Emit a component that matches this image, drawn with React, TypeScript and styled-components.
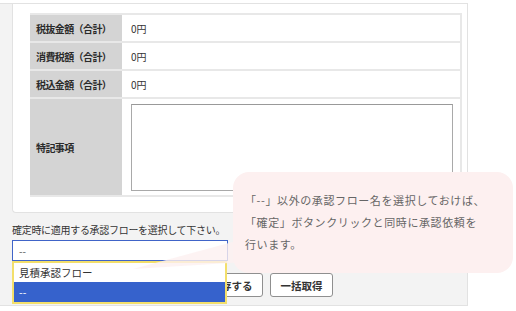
import React from "react";
import styled, { createGlobalStyle } from "styled-components";

const GlobalStyle = createGlobalStyle`
  html, body {
    margin: 0;
    padding: 0;
    background: #ffffff;
  }
  body {
    font-family: "Noto Sans CJK JP", "Noto Sans", sans-serif;
    color: #333333;
  }
`;

const Page = styled.div`
  position: relative;
  width: 516px;
  height: 311px;
  overflow: hidden;
`;

const Frame = styled.div`
  margin-top: 3px;
  width: 468px;
  height: 303px;
  box-sizing: border-box;
  background: #f3f3f3;
  border-top: 1px solid #e2e2e2;
  border-right: 1px solid #e2e2e2;
  border-bottom: 1px solid #e2e2e2;
  padding-left: 12px;
`;

const Panel = styled.div`
  background: #ffffff;
  border-left: 1px solid #e2e2e2;
  border-bottom: 1px solid #e2e2e2;
  border-bottom-left-radius: 4px;
  padding: 9px 5px 15px 17px;
`;

const Table = styled.table`
  width: 100%;
  border-collapse: separate;
  border-spacing: 0;
  border-top: 2px solid #e8e8e8;
`;

const Row = styled.tr<{ $tall?: boolean }>`
  height: ${(p) => (p.$tall ? "98px" : "28px")};
`;

const HeadCell = styled.th`
  width: 92px;
  box-sizing: border-box;
  background: #d4d4d4;
  border-bottom: 2px solid #e8e8e8;
  padding: 0 0 0 6px;
  text-align: left;
  vertical-align: middle;
  font-size: 10px;
  font-weight: 700;
  letter-spacing: -0.6px;
  color: #2a2a2a;
  white-space: nowrap;
`;

const ValueCell = styled.td`
  border-bottom: 2px solid #e8e8e8;
  border-right: 2px solid #e8e8e8;
  padding: 0 7px 0 9px;
  vertical-align: middle;
  font-size: 10px;
  color: #333333;
`;

const Memo = styled.textarea`
  display: block;
  width: 322px;
  height: 87px;
  box-sizing: border-box;
  border: 1px solid #a9a9a9;
  border-top-color: #999999;
  resize: none;
  margin: 0;
`;

const Footer = styled.div`
  padding-top: 11px;
`;

const Label = styled.div`
  font-size: 10px;
  line-height: 12px;
  letter-spacing: -0.3px;
  color: #333333;
  margin-bottom: 4px;
`;

const SelectWrap = styled.div`
  position: relative;
  width: 216px;
  z-index: 3;
`;

const SelectBox = styled.div`
  height: 21px;
  box-sizing: border-box;
  border: 1px solid #4064c8;
  background: #ffffff;
  padding-left: 6px;
  font-size: 10px;
  line-height: 19px;
  color: #555555;
`;

const Dropdown = styled.div`
  position: absolute;
  top: 21px;
  left: 0;
  width: 215px;
  box-sizing: border-box;
  border: 2px solid #f3df6b;
  background: #ffffff;
`;

const Option = styled.div<{ $active?: boolean }>`
  height: ${(p) => (p.$active ? "20px" : "19px")};
  padding-left: 5px;
  font-size: 10.5px;
  line-height: ${(p) => (p.$active ? "20px" : "19px")};
  background: ${(p) => (p.$active ? "#3662cc" : "#ffffff")};
  color: ${(p) => (p.$active ? "#ffffff" : "#333333")};
`;

const Buttons = styled.div`
  display: flex;
  gap: 7px;
  margin-top: 12px;
  margin-left: 188px;
`;

const Button = styled.button`
  width: 63px;
  height: 24px;
  box-sizing: border-box;
  border: 1px solid #8f8f8f;
  border-radius: 3px;
  background: #ffffff;
  font-family: "Noto Sans CJK JP", "Noto Sans", sans-serif;
  font-size: 10.5px;
  font-weight: 700;
  color: #333333;
  padding: 0;
`;

const Bubble = styled.div`
  position: absolute;
  left: 233px;
  top: 172px;
  width: 280px;
  height: 101px;
  box-sizing: border-box;
  border-radius: 16px;
  background: #fdf0f0;
  padding: 17px 0 0 12px;
  font-size: 11px;
  line-height: 22px;
  letter-spacing: 0.6px;
  color: #666666;
  z-index: 4;
`;

const Tail = styled.svg`
  position: absolute;
  left: 0;
  top: 0;
  z-index: 4;
  pointer-events: none;
`;

export default function App() {
  return (
    <Page>
      <GlobalStyle />
      <Frame>
        <Panel>
          <Table>
            <tbody>
              <Row>
                <HeadCell>税抜金額（合計）</HeadCell>
                <ValueCell>0円</ValueCell>
              </Row>
              <Row>
                <HeadCell>消費税額（合計）</HeadCell>
                <ValueCell>0円</ValueCell>
              </Row>
              <Row>
                <HeadCell>税込金額（合計）</HeadCell>
                <ValueCell>0円</ValueCell>
              </Row>
              <Row $tall>
                <HeadCell>特記事項</HeadCell>
                <ValueCell>
                  <Memo />
                </ValueCell>
              </Row>
            </tbody>
          </Table>
        </Panel>
        <Footer>
          <Label>確定時に適用する承認フローを選択して下さい。</Label>
          <SelectWrap>
            <SelectBox>--</SelectBox>
            <Dropdown>
              <Option>見積承認フロー</Option>
              <Option $active>--</Option>
            </Dropdown>
          </SelectWrap>
          <Buttons>
            <Button>保存する</Button>
            <Button>一括取得</Button>
          </Buttons>
        </Footer>
      </Frame>
      <Tail width="516" height="311" viewBox="0 0 516 311">
        <polygon points="240,240 246,262 133,269" fill="#fdf0f0" fillOpacity="0.8" />
      </Tail>
      <Bubble>
        「--」以外の承認フロー名を選択しておけば、
        <br />
        「確定」ボタンクリックと同時に承認依頼を
        <br />
        行います。
      </Bubble>
    </Page>
  );
}
